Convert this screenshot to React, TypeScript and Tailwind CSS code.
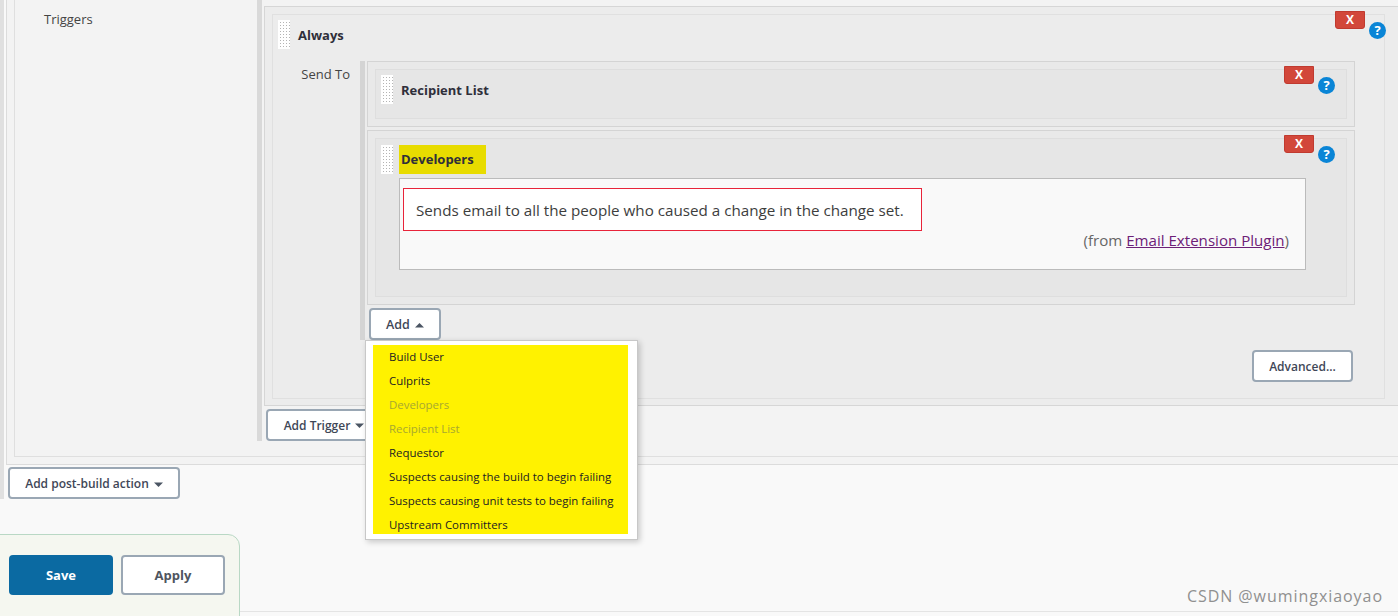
const FONT = "font-['Open_Sans','Noto_Sans',sans-serif]";

const MENU_ITEMS = [
  { label: "Build User" },
  { label: "Culprits" },
  { label: "Developers", disabled: true },
  { label: "Recipient List", disabled: true },
  { label: "Requestor" },
  { label: "Suspects causing the build to begin failing" },
  { label: "Suspects causing unit tests to begin failing" },
  { label: "Upstream Committers" },
];

function Handle() {
  return (
    <div className="w-3 h-[29px] shrink-0 bg-[linear-gradient(#ffffff_2px,transparent_2px),linear-gradient(90deg,#ffffff_2px,#b4b4b4_2px)] bg-[length:3px_3px]" />
  );
}

function Caret({ up }: { up?: boolean }) {
  return (
    <svg width="9" height="5" viewBox="0 0 9 5" className="shrink-0">
      <path d={up ? "M0 4.5 L4.5 0 L9 4.5 Z" : "M0 0.5 L9 0.5 L4.5 5 Z"} fill="#4b5563" />
    </svg>
  );
}

function Button({ className, children }: { className: string; children: React.ReactNode }) {
  return (
    <div className={`flex items-center justify-center gap-[5px] bg-white border-2 border-[#9aa7b4] rounded-[4px] font-semibold text-[#3f4757] ${className}`}>
      {children}
    </div>
  );
}

function DeleteHelp({ className }: { className: string }) {
  return (
    <div className={`absolute flex items-start ${className}`}>
      <div className="w-[30px] h-[18px] bg-[#d2473a] border border-[#c03a2f] rounded-b-[3px] flex items-center justify-center text-white text-[12px] font-bold leading-none">
        X
      </div>
      <div className="ml-1 mt-[11px] w-[17px] h-[17px] rounded-full bg-[#0a85d6] flex items-center justify-center text-white text-[13px] font-bold leading-none">
        ?
      </div>
    </div>
  );
}

export default function App() {
  return (
    <div className={`relative w-[1398px] h-[616px] overflow-hidden bg-[#f9f9f9] text-[#333] ${FONT}`}>
      <div className="flex items-start">
        <div className="w-1 h-[499px] bg-[#e0e0e0] shrink-0" />
        <div className="flex-1 pl-[2px]">
          {/* post-build section */}
          <div className="h-[465px] bg-[#f3f3f3] border-l border-b border-[#dcdcdc] pl-[7px] pb-[7px]">
            <div className="h-full border-l border-b border-[#dfdfdf] flex">
              <div className="w-[242px] shrink-0 pl-[29px] pt-[10px] text-[13px] leading-[18px] text-[#444]">Triggers</div>

              <div className="flex-1 flex items-start">
                <div className="w-[5px] h-[441px] bg-[#d9d9d9] shrink-0" />
                <div className="flex-1 ml-[2px] pt-[6px]">
                  <div className="relative h-[400px] bg-[#ececec] border-t border-l border-b border-[#d6d6d6] pl-[7px] pt-[7px] pb-[6px] pr-[13px]">
                    <DeleteHelp className="top-1 right-3" />
                    <div className="h-full border border-[#e0e0e0] pl-[5px] pt-[5px] pr-[29px]">
                      <div className="flex items-center h-[29px]">
                        <Handle />
                        <span className="ml-2 pt-[2px] text-[13px] font-bold text-[#2f2f3a]">Always</span>
                      </div>

                      <div className="flex mt-[12px]">
                        <div className="w-[72px] shrink-0 text-right text-[13px] leading-[18px] pt-1 text-[#444]">Send To</div>
                        <div className="ml-[10px] w-[5px] h-[279px] bg-[#d4d4d4] shrink-0" />
                        <div className="flex-1 ml-[2px] min-w-0">
                          <div className="relative h-[66px] bg-[#e9e9e9] border border-[#d4d4d4] p-[7px]">
                            <DeleteHelp className="top-1 right-[19px]" />
                            <div className="h-full bg-[#e6e6e6] border border-[#dedede] pl-[5px] pt-[5px] flex items-start">
                              <Handle />
                              <span className="ml-2 text-[13px] font-bold leading-[31px] text-[#2f2f3a]">Recipient List</span>
                            </div>
                          </div>

                          <div className="relative mt-[3px] h-[175px] bg-[#e9e9e9] border border-[#d4d4d4] p-[7px]">
                            <DeleteHelp className="top-1 right-[19px]" />
                            <div className="h-full bg-[#e6e6e6] border border-[#dedede] pl-[5px] pt-[6px] pr-[40px]">
                              <div className="flex items-start">
                                <Handle />
                                <span className="ml-[6px] w-[87px] h-[29px] bg-[#e8dc00] pl-[2px] text-[13px] font-bold leading-[29px] text-[#2f2f3a]">Developers</span>
                              </div>
                              <div className="ml-[18px] mt-[4px] h-[92px] bg-[#f9f9f9] border border-[#bbbbbb] pl-[3px] pt-[9px] pr-4">
                                <div className="w-[519px] h-[43px] pt-px bg-white border border-[#e8243a] pl-3 flex items-center text-[15.2px] text-[#3d3d3d] whitespace-nowrap">
                                  Sends email to all the people who caused a change in the change set.
                                </div>
                                <div className="text-right text-[15.1px] leading-[18px] text-[#666]">
                                  (from <span className="underline text-[#6d2077]">Email Extension Plugin</span>)
                                </div>
                              </div>
                            </div>
                          </div>

                          <Button className="ml-[2px] mt-[3px] w-[72px] h-[32px] pt-[2px] text-[12.5px]">
                            Add <Caret up />
                          </Button>
                          <div className="flex justify-end mt-[10px] pr-[2px]">
                            <Button className="w-[101px] h-[32px] pt-px text-[12px]">Advanced...</Button>
                          </div>
                        </div>
                      </div>
                    </div>
                  </div>
                  <Button className="mt-[3px] ml-[2px] w-[116px] h-[32px] pt-px text-[12px]">
                    Add Trigger <Caret />
                  </Button>
                </div>
              </div>
            </div>
          </div>

          <Button className="mt-[2px] ml-[2px] w-[172px] h-[32px] pt-[2px] text-[12px]">
            Add post-build action <Caret />
          </Button>
        </div>
      </div>

      {/* dropdown menu */}
      <div className="absolute left-[365px] top-[340px] w-[273px] h-[200px] bg-white border border-[#c8c8c8] shadow-[2px_2px_6px_rgba(0,0,0,0.2)] pl-[7px] pt-[4px]">
        <div className="w-[255px] h-[189px] bg-[#fff200] pl-4">
          {MENU_ITEMS.map((item) => (
            <div
              key={item.label}
              className={`h-6 text-[11.45px] leading-[24px] whitespace-nowrap ${item.disabled ? "text-[#a8a830]" : "text-[#222]"}`}
            >
              {item.label}
            </div>
          ))}
        </div>
      </div>

      {/* bottom rule and sticky save bar */}
      <div className="absolute left-0 right-0 top-[611px] h-px bg-[#e4e4e4]" />
      <div className="absolute -left-px top-[534px] w-[241px] h-[90px] bg-[#f5f7f0] border border-[#b9d8c5] rounded-tr-[12px] pl-[9px] pt-[20px] flex gap-2 items-start">
        <div className="w-[104px] h-[40px] pt-px bg-[#0b6aa2] rounded-[4px] flex items-center justify-center text-white text-[13px] font-bold">
          Save
        </div>
        <Button className="w-[104px] h-[40px] pt-px text-[13px] !font-bold !text-[#4f5560]">Apply</Button>
      </div>

      <div className="absolute right-[15px] top-[586px] text-[16px] leading-[20px] tracking-[0.95px] text-[#909090]">
        CSDN @wumingxiaoyao
      </div>
    </div>
  );
}
